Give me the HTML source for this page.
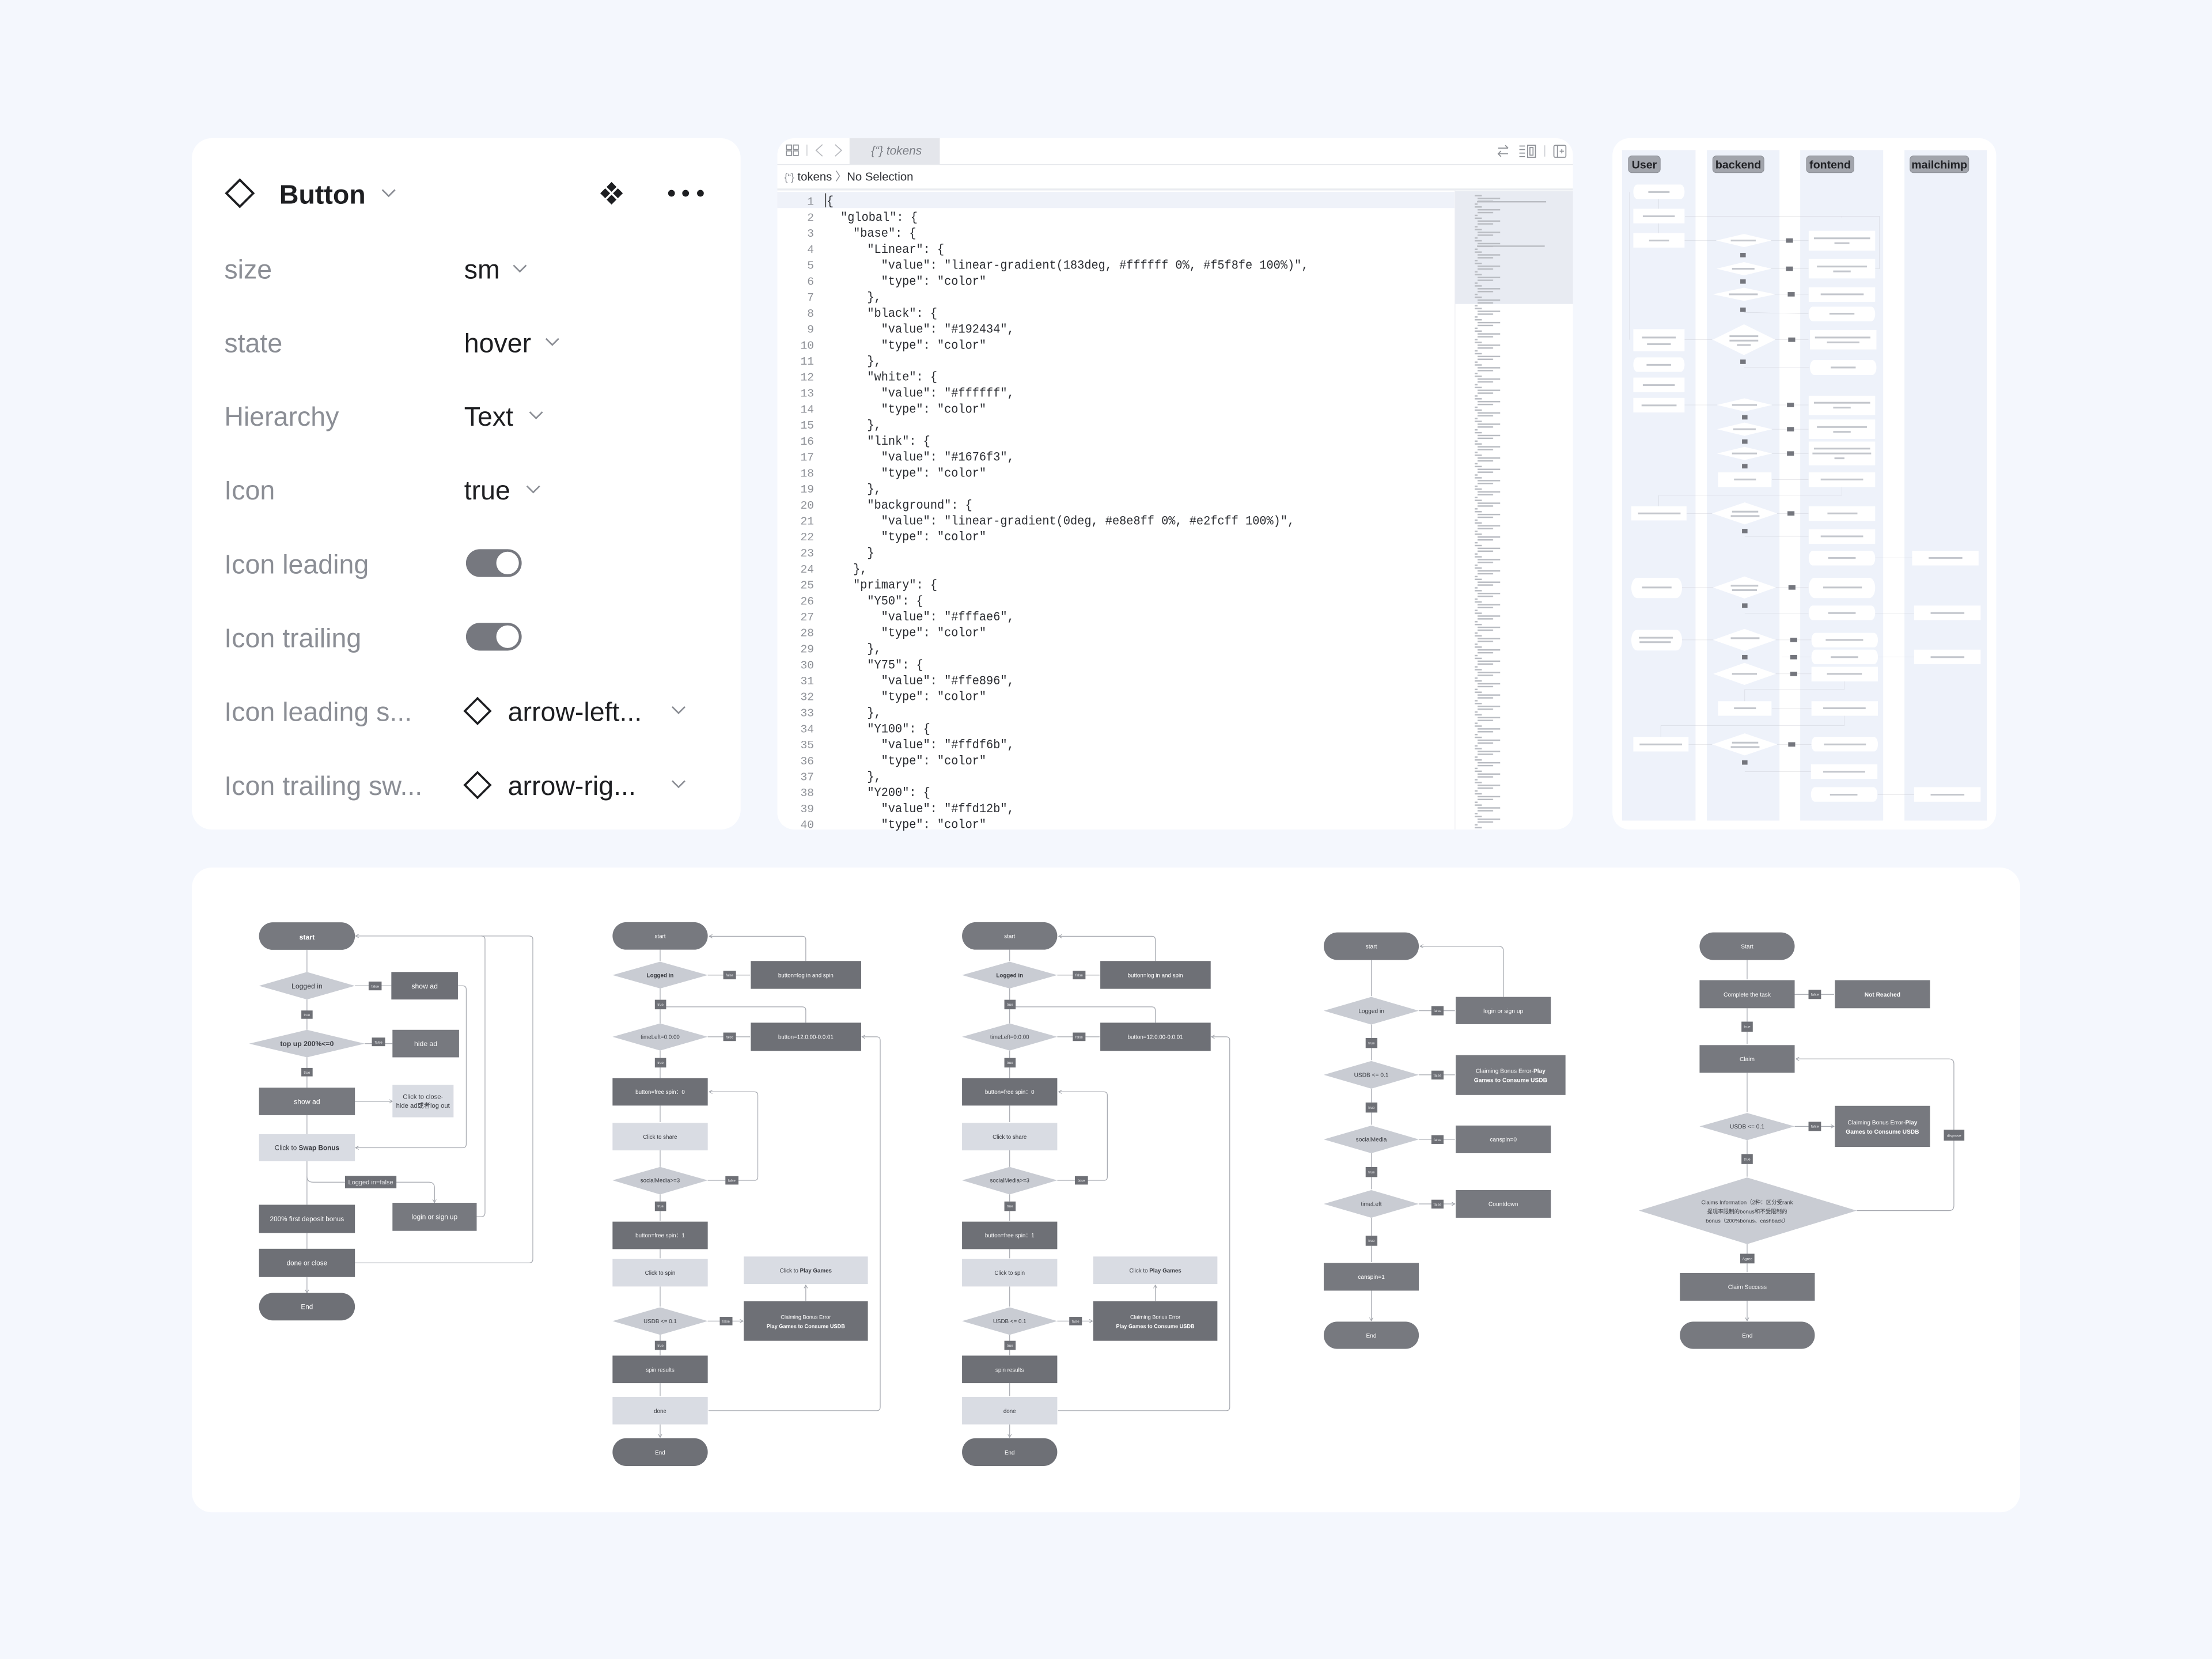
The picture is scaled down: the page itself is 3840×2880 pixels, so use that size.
<!DOCTYPE html>
<html><head><meta charset="utf-8"><style>
html,body{margin:0;padding:0;background:#f4f7fd;}
svg{display:block;}
text{font-family:"Liberation Sans","Noto Sans CJK SC",sans-serif;}
.mono{font-family:"Liberation Mono",monospace;font-size:9.2px;fill:#2a2c31;}
.ln{font-family:"Liberation Mono",monospace;font-size:8px;fill:#8f9298;text-anchor:end;}
.lbl{font-size:19px;fill:#8b8e95;}
.val{font-size:19px;fill:#1d1e21;}
.chev{fill:none;stroke:#8b8e95;stroke-width:1.1;}
.ln2{fill:none;stroke:#a5a8af;}
.dk{fill:#77797f;}
.dk2{fill:#6e7076;}
.lt{fill:#d9dce3;}
.dm{fill:#c9ccd3;}
.tw{fill:#fff;text-anchor:middle;}
.td{fill:#3a3c42;text-anchor:middle;}
.tag{fill:#6e7076;}
.tagt{fill:#e8e9ec;text-anchor:middle;}
</style></head><body>
<svg width="3840" height="2880" viewBox="0 0 1568 1176" xmlns="http://www.w3.org/2000/svg">
<defs>
<marker id="ar" markerWidth="6" markerHeight="6" refX="5" refY="3" orient="auto" markerUnits="strokeWidth"><path d="M0.5,0.5 L5,3 L0.5,5.5" fill="none" stroke="#9a9da4" stroke-width="0.8"/></marker>
<clipPath id="cp"><rect x="551" y="98" width="564" height="490" rx="12"/></clipPath>
<pattern id="mm" x="1031.4" y="138" width="84" height="8" patternUnits="userSpaceOnUse">
<rect x="14" y="0.2" width="5" height="1" fill="#b9bcc2"/>
<rect x="16" y="2.2" width="16" height="1" fill="#b9bcc2"/>
<rect x="16" y="4.2" width="11" height="1" fill="#b9bcc2"/>
<rect x="14" y="6.2" width="2" height="1" fill="#b9bcc2"/>
</pattern>
</defs>
<rect width="1568" height="1176" fill="#f4f7fd"/>

<!-- LEFT PANEL -->
<rect x="136" y="98" width="389" height="490" rx="14" fill="#fff"/>
<polygon points="160.5,137 170,127.5 179.5,137 170,146.5" fill="none" stroke="#1d1e21" stroke-width="1.6"/>
<text x="198" y="144.3" style="font-size:19px;font-weight:bold;fill:#1d1e21">Button</text>
<polyline class="chev" points="271,134.5 275.5,139 280,134.5"/>
<g fill="#1d1e21">
<polygon points="433.5,129 437,132.5 433.5,136 430,132.5"/>
<polygon points="433.5,138 437,141.5 433.5,145 430,141.5"/>
<polygon points="429,133.5 432.5,137 429,140.5 425.5,137"/>
<polygon points="438,133.5 441.5,137 438,140.5 434.5,137"/>
<circle cx="476" cy="137" r="2.4"/><circle cx="486" cy="137" r="2.4"/><circle cx="496.5" cy="137" r="2.4"/>
</g>
<text class="lbl" x="159" y="197.4">size</text>
<text class="lbl" x="159" y="249.6">state</text>
<text class="lbl" x="159" y="301.8">Hierarchy</text>
<text class="lbl" x="159" y="354">Icon</text>
<text class="lbl" x="159" y="406.5">Icon leading</text>
<text class="lbl" x="159" y="458.8">Icon trailing</text>
<text class="lbl" x="159" y="511">Icon leading s...</text>
<text class="lbl" x="159" y="563.5">Icon trailing sw...</text>
<text class="val" x="329" y="197.4">sm</text>
<polyline class="chev" points="364,188 368.5,192.5 373,188"/>
<text class="val" x="329" y="249.6">hover</text>
<polyline class="chev" points="387,240 391.5,244.5 396,240"/>
<text class="val" x="329" y="301.8">Text</text>
<polyline class="chev" points="375.5,292 380,296.5 384.5,292"/>
<text class="val" x="329" y="354">true</text>
<polyline class="chev" points="373.5,344.5 378,349 382.5,344.5"/>
<rect x="330.3" y="389.3" width="39.5" height="19.7" rx="9.85" fill="#76787f"/>
<circle cx="359.8" cy="399.1" r="8" fill="#fff"/>
<rect x="330.3" y="441.5" width="39.5" height="19.7" rx="9.85" fill="#76787f"/>
<circle cx="359.8" cy="451.3" r="8" fill="#fff"/>
<polygon points="329.5,504 338.5,495 347.5,504 338.5,513" fill="none" stroke="#1d1e21" stroke-width="1.5"/>
<text class="val" x="360" y="511">arrow-left...</text>
<polyline class="chev" points="476.5,501 481,505.5 485.5,501"/>
<polygon points="329.5,556.5 338.5,547.5 347.5,556.5 338.5,565.5" fill="none" stroke="#1d1e21" stroke-width="1.5"/>
<text class="val" x="360" y="563.5">arrow-rig...</text>
<polyline class="chev" points="476.5,553.5 481,558 485.5,553.5"/>

<!-- CODE PANEL -->
<g clip-path="url(#cp)">
<rect x="551" y="98" width="564" height="490" fill="#fff"/>
<rect x="602.2" y="98" width="64" height="18.4" fill="#e4e6eb"/>
<line x1="551" y1="116.6" x2="1115" y2="116.6" stroke="#e6e8ec" stroke-width="0.6"/>
<rect x="551" y="133.6" width="564" height="1.4" fill="#eaecf0"/>
<rect x="551" y="136" width="480" height="11.5" fill="#eff2f9"/>
<rect x="1031.4" y="135.5" width="84" height="80" fill="#e8ebf2"/>
<rect x="1031.4" y="138" width="84" height="450" fill="url(#mm)"/>
<rect x="1047" y="142.5" width="49" height="1" fill="#b9bcc2"/>
<rect x="1047" y="174" width="48" height="1" fill="#b9bcc2"/>
<line x1="1031.4" y1="135" x2="1031.4" y2="588" stroke="#eceef2" stroke-width="0.5"/>
</g>
<!-- toolbar icons -->
<g fill="none" stroke="#8d9096" stroke-width="0.7">
<rect x="557.5" y="102.8" width="3.6" height="3.2"/><rect x="562.3" y="102.8" width="3.6" height="3.2"/>
<rect x="557.5" y="107" width="3.6" height="3.2"/><rect x="562.3" y="107" width="3.6" height="3.2"/>
<line x1="572" y1="102.5" x2="572" y2="110.5" stroke="#d0d2d6"/>
<polyline points="583,102.5 578.5,106.6 583,110.7" stroke="#b7b9be"/>
<polyline points="592,102.5 596.5,106.6 592,110.7" stroke="#b7b9be"/>
<path d="M1062,105 H1069 M1067,103 L1069,105 M1069,109 H1062 M1064,107 L1062,109 L1064,111"/>
<path d="M1077,103.5 H1081 M1077,106 H1081 M1077,108.5 H1081 M1077,111 H1081"/>
<rect x="1082.8" y="103" width="5.6" height="8.5"/><rect x="1084.5" y="104.5" width="2.2" height="5.5"/>
<line x1="1095" y1="103" x2="1095" y2="111" stroke="#d0d2d6"/>
<rect x="1101.5" y="103" width="8.5" height="8.5" rx="1"/><line x1="1104" y1="103" x2="1104" y2="111.5"/>
<path d="M1105.6,107.2 H1108.6 M1107.1,105.7 V108.7"/>
</g>
<text x="617.5" y="109.6" style="font-size:8.5px;font-style:italic;fill:#7b7e85">{“} tokens</text>
<text x="556" y="128" style="font-size:8.3px;fill:#2a2c31"><tspan fill="#8b8e95" font-size="7">{“}</tspan> tokens <tspan fill="#8b8e95">〉</tspan>No Selection</text>
<line x1="585.3" y1="137" x2="585.3" y2="147" stroke="#222" stroke-width="0.6"/>

<g>
<text class="ln" x="577" y="145.2">1</text>
<text class="ln" x="577" y="156.5">2</text>
<text class="ln" x="577" y="167.9">3</text>
<text class="ln" x="577" y="179.2">4</text>
<text class="ln" x="577" y="190.5">5</text>
<text class="ln" x="577" y="201.9">6</text>
<text class="ln" x="577" y="213.2">7</text>
<text class="ln" x="577" y="224.5">8</text>
<text class="ln" x="577" y="235.8">9</text>
<text class="ln" x="577" y="247.2">10</text>
<text class="ln" x="577" y="258.5">11</text>
<text class="ln" x="577" y="269.8">12</text>
<text class="ln" x="577" y="281.2">13</text>
<text class="ln" x="577" y="292.5">14</text>
<text class="ln" x="577" y="303.8">15</text>
<text class="ln" x="577" y="315.2">16</text>
<text class="ln" x="577" y="326.5">17</text>
<text class="ln" x="577" y="337.8">18</text>
<text class="ln" x="577" y="349.1">19</text>
<text class="ln" x="577" y="360.5">20</text>
<text class="ln" x="577" y="371.8">21</text>
<text class="ln" x="577" y="383.1">22</text>
<text class="ln" x="577" y="394.5">23</text>
<text class="ln" x="577" y="405.8">24</text>
<text class="ln" x="577" y="417.1">25</text>
<text class="ln" x="577" y="428.5">26</text>
<text class="ln" x="577" y="439.8">27</text>
<text class="ln" x="577" y="451.1">28</text>
<text class="ln" x="577" y="462.4">29</text>
<text class="ln" x="577" y="473.8">30</text>
<text class="ln" x="577" y="485.1">31</text>
<text class="ln" x="577" y="496.4">32</text>
<text class="ln" x="577" y="507.8">33</text>
<text class="ln" x="577" y="519.1">34</text>
<text class="ln" x="577" y="530.4">35</text>
<text class="ln" x="577" y="541.8">36</text>
<text class="ln" x="577" y="553.1">37</text>
<text class="ln" x="577" y="564.4">38</text>
<text class="ln" x="577" y="575.7">39</text>
<text class="ln" x="577" y="587">40</text>
</g>
<g transform="matrix(0.9,0,0,1,58.5,0)">
<text class="mono" x="586" y="145.2">{</text>
<text class="mono" x="597" y="156.5">"global": {</text>
<text class="mono" x="607" y="167.9">"base": {</text>
<text class="mono" x="618" y="179.2">"Linear": {</text>
<text class="mono" x="629" y="190.5">"value": "linear-gradient(183deg, #ffffff 0%, #f5f8fe 100%)",</text>
<text class="mono" x="629" y="201.9">"type": "color"</text>
<text class="mono" x="618" y="213.2">},</text>
<text class="mono" x="618" y="224.5">"black": {</text>
<text class="mono" x="629" y="235.8">"value": "#192434",</text>
<text class="mono" x="629" y="247.2">"type": "color"</text>
<text class="mono" x="618" y="258.5">},</text>
<text class="mono" x="618" y="269.8">"white": {</text>
<text class="mono" x="629" y="281.2">"value": "#ffffff",</text>
<text class="mono" x="629" y="292.5">"type": "color"</text>
<text class="mono" x="618" y="303.8">},</text>
<text class="mono" x="618" y="315.2">"link": {</text>
<text class="mono" x="629" y="326.5">"value": "#1676f3",</text>
<text class="mono" x="629" y="337.8">"type": "color"</text>
<text class="mono" x="618" y="349.1">},</text>
<text class="mono" x="618" y="360.5">"background": {</text>
<text class="mono" x="629" y="371.8">"value": "linear-gradient(0deg, #e8e8ff 0%, #e2fcff 100%)",</text>
<text class="mono" x="629" y="383.1">"type": "color"</text>
<text class="mono" x="618" y="394.5">}</text>
<text class="mono" x="607" y="405.8">},</text>
<text class="mono" x="607" y="417.1">"primary": {</text>
<text class="mono" x="618" y="428.5">"Y50": {</text>
<text class="mono" x="629" y="439.8">"value": "#fffae6",</text>
<text class="mono" x="629" y="451.1">"type": "color"</text>
<text class="mono" x="618" y="462.4">},</text>
<text class="mono" x="618" y="473.8">"Y75": {</text>
<text class="mono" x="629" y="485.1">"value": "#ffe896",</text>
<text class="mono" x="629" y="496.4">"type": "color"</text>
<text class="mono" x="618" y="507.8">},</text>
<text class="mono" x="618" y="519.1">"Y100": {</text>
<text class="mono" x="629" y="530.4">"value": "#ffdf6b",</text>
<text class="mono" x="629" y="541.8">"type": "color"</text>
<text class="mono" x="618" y="553.1">},</text>
<text class="mono" x="618" y="564.4">"Y200": {</text>
<text class="mono" x="629" y="575.7">"value": "#ffd12b",</text>
<text class="mono" x="629" y="587">"type": "color"</text>
</g>

<!-- SWIMLANE PANEL -->
<rect x="1143" y="98" width="272" height="490" rx="12" fill="#fff"/>
<g fill="#eef2fa">
<rect x="1149.8" y="106.4" width="52.1" height="475.3"/>
<rect x="1209.9" y="106.4" width="51.5" height="475.3"/>
<rect x="1276.1" y="106.4" width="58.8" height="475.3"/>
<rect x="1350" y="106.4" width="58.4" height="475.3"/>
</g>
<g transform="translate(1139.2,98) scale(0.1771,0.3125)">
<g fill="none" stroke="#b8bbc2" stroke-width="0.5" vector-effect="non-scaling-stroke">
<path d="M310,232 H436 M655,232 H806 M655,296 H806 M670,354 H806 M548,395 L806,398 M310,457 H420 M670,457 H806 M548,520 H810 M310,605 H440 M660,605 H806 M660,660 H806 M660,715 H806 M660,774 H806 M940,791 V810 H207 V835 M318,851 H420 M680,851 H806 M551,903 H806 M300,1019 H425 M675,1019 H806 M551,1077 H806 M1073,952 H1221 M1073,1077 H1229 M300,1138 H425 M675,1138 H818 M675,1215 H818 M700,1177 H818 M1083,1177 H1229 M950,1232 V1250 H551 V1277 M660,1293 H818 M950,1310 V1332 H215 V1358 M326,1375 H420 M680,1375 H818 M551,1437 H818 M1083,1489 H1229 M207,138 V160 M207,193 V215 M90,122 V457 M940,180 V177 H312 M1073,296 H1090 V177 H940"/>
</g>
<g fill="#fff">
<rect x="105" y="105" width="205" height="33" rx="16"/>
<rect x="105" y="160" width="205" height="33"/>
<rect x="105" y="215" width="205" height="33"/>
<rect x="105" y="433" width="205" height="50"/>
<rect x="105" y="497" width="205" height="33" rx="16"/>
<rect x="105" y="543" width="205" height="33"/>
<rect x="105" y="589" width="205" height="33"/>
<rect x="97" y="835" width="221" height="32"/>
<rect x="97" y="997" width="203" height="46" rx="23"/>
<rect x="97" y="1115" width="203" height="47" rx="23"/>
<rect x="105" y="1358" width="221" height="33"/>
<polygon points="438,232 548,217 658,232 548,247"/>
<polygon points="438,296 548,281 658,296 548,311"/>
<polygon points="423,354 548,339 673,354 548,369"/>
<polygon points="423,457 548,422 673,457 548,492"/>
<polygon points="440,605 550,590 660,605 550,620"/>
<polygon points="440,660 550,645 660,660 550,675"/>
<polygon points="440,715 550,700 660,715 550,730"/>
<rect x="444" y="758" width="214" height="33"/>
<polygon points="421,851 551,826 681,851 551,876"/>
<polygon points="425,1019 550,994 675,1019 550,1044"/>
<polygon points="425,1138 550,1113 675,1138 550,1163"/>
<polygon points="425,1215 550,1190 675,1215 550,1240"/>
<rect x="444" y="1277" width="214" height="33"/>
<polygon points="421,1375 551,1350 681,1375 551,1400"/>
<rect x="807" y="210" width="266" height="45"/>
<rect x="807" y="274" width="266" height="44"/>
<rect x="807" y="338" width="266" height="33"/>
<rect x="807" y="382" width="266" height="33" rx="16"/>
<rect x="812" y="435" width="266" height="44"/>
<rect x="812" y="503" width="266" height="34" rx="17"/>
<rect x="807" y="584" width="266" height="44"/>
<rect x="807" y="638" width="266" height="44"/>
<rect x="807" y="688" width="266" height="54"/>
<rect x="807" y="758" width="266" height="33"/>
<rect x="807" y="835" width="266" height="33"/>
<rect x="807" y="887" width="266" height="33"/>
<rect x="807" y="936" width="266" height="33" rx="16"/>
<rect x="807" y="997" width="266" height="46" rx="23"/>
<rect x="807" y="1060" width="266" height="33" rx="16"/>
<rect x="818" y="1122" width="266" height="33" rx="16"/>
<rect x="818" y="1160" width="266" height="33" rx="16"/>
<rect x="818" y="1199" width="266" height="33"/>
<rect x="818" y="1277" width="266" height="33"/>
<rect x="818" y="1358" width="266" height="33" rx="16"/>
<rect x="816" y="1420" width="266" height="33"/>
<rect x="816" y="1472" width="266" height="33" rx="16"/>
<rect x="1221" y="936" width="266" height="33"/>
<rect x="1229" y="1060" width="266" height="33"/>
<rect x="1229" y="1160" width="266" height="33"/>
<rect x="1229" y="1472" width="266" height="33"/>
</g>
<g fill="#c3c6cc">
<rect x="165" y="120" width="85" height="4"/><rect x="143" y="175" width="128" height="4"/><rect x="168" y="230" width="80" height="4"/>
<rect x="140" y="450" width="135" height="4"/><rect x="160" y="465" width="95" height="4"/><rect x="158" y="512" width="98" height="4"/><rect x="143" y="558" width="128" height="4"/><rect x="138" y="604" width="140" height="4"/>
<rect x="124" y="849" width="170" height="4"/><rect x="140" y="1017" width="118" height="4"/><rect x="127" y="1131" width="136" height="4"/><rect x="130" y="1141" width="125" height="4"/><rect x="130" y="1373" width="170" height="4"/>
<rect x="495" y="230" width="100" height="4"/><rect x="500" y="294" width="90" height="4"/><rect x="488" y="352" width="115" height="4"/><rect x="490" y="447" width="115" height="4"/><rect x="490" y="457" width="115" height="4"/><rect x="520" y="467" width="55" height="4"/>
<rect x="500" y="603" width="100" height="4"/><rect x="505" y="658" width="90" height="4"/><rect x="500" y="713" width="100" height="4"/><rect x="508" y="772" width="88" height="4"/><rect x="500" y="845" width="105" height="4"/><rect x="495" y="855" width="115" height="4"/>
<rect x="495" y="1013" width="110" height="4"/><rect x="500" y="1023" width="100" height="4"/><rect x="495" y="1132" width="115" height="4"/><rect x="500" y="1213" width="100" height="4"/><rect x="508" y="1291" width="88" height="4"/><rect x="500" y="1369" width="105" height="4"/><rect x="495" y="1379" width="115" height="4"/>
<rect x="828" y="225" width="225" height="4"/><rect x="910" y="236" width="60" height="4"/><rect x="840" y="289" width="200" height="4"/><rect x="905" y="300" width="70" height="4"/><rect x="855" y="352" width="172" height="4"/><rect x="890" y="396" width="100" height="4"/>
<rect x="832" y="450" width="222" height="4"/><rect x="880" y="461" width="130" height="4"/><rect x="895" y="518" width="100" height="4"/><rect x="828" y="598" width="225" height="4"/><rect x="905" y="609" width="70" height="4"/><rect x="840" y="653" width="200" height="4"/><rect x="905" y="664" width="70" height="4"/>
<rect x="828" y="702" width="225" height="4"/><rect x="822" y="713" width="235" height="4"/><rect x="910" y="724" width="40" height="4"/><rect x="855" y="772" width="170" height="4"/><rect x="882" y="849" width="120" height="4"/><rect x="855" y="901" width="170" height="4"/><rect x="885" y="950" width="110" height="4"/>
<rect x="865" y="1017" width="155" height="4"/><rect x="885" y="1075" width="110" height="4"/><rect x="875" y="1136" width="150" height="4"/><rect x="895" y="1175" width="110" height="4"/><rect x="880" y="1213" width="140" height="4"/><rect x="865" y="1291" width="170" height="4"/><rect x="868" y="1373" width="168" height="4"/><rect x="865" y="1435" width="168" height="4"/><rect x="892" y="1487" width="110" height="4"/>
<rect x="1287" y="950" width="135" height="4"/><rect x="1295" y="1075" width="135" height="4"/><rect x="1295" y="1175" width="135" height="4"/><rect x="1295" y="1487" width="135" height="4"/>
</g>
<g fill="#74767d">
<rect x="716" y="227" width="28" height="10"/><rect x="716" y="291" width="28" height="10"/><rect x="723" y="349" width="28" height="10"/><rect x="725" y="452" width="28" height="10"/>
<rect x="720" y="600" width="28" height="10"/><rect x="720" y="655" width="28" height="10"/><rect x="720" y="710" width="28" height="10"/><rect x="722" y="846" width="28" height="10"/>
<rect x="726" y="1014" width="28" height="10"/><rect x="733" y="1133" width="28" height="10"/><rect x="733" y="1172" width="28" height="10"/><rect x="733" y="1210" width="28" height="10"/><rect x="725" y="1370" width="28" height="10"/>
<rect x="533" y="260" width="22" height="10"/><rect x="533" y="320" width="22" height="10"/><rect x="533" y="384" width="22" height="10"/><rect x="533" y="502" width="22" height="10"/>
<rect x="540" y="628" width="22" height="10"/><rect x="540" y="683" width="22" height="10"/><rect x="540" y="739" width="22" height="10"/><rect x="540" y="886" width="22" height="10"/><rect x="540" y="1055" width="22" height="10"/><rect x="540" y="1172" width="22" height="10"/><rect x="540" y="1411" width="22" height="10"/>
</g>
</g>
<g fill="#a2a5ac" stroke="#8b8e95" stroke-width="0.4">
<rect x="1154.3" y="110.5" width="22.6" height="11.9" rx="2.5"/>
<rect x="1214.1" y="110.5" width="36.3" height="11.9" rx="2.5"/>
<rect x="1280.5" y="110.5" width="33.7" height="11.9" rx="2.5"/>
<rect x="1353.9" y="110.5" width="41.7" height="11.9" rx="2.5"/>
</g>
<g style="font-size:8px;font-weight:bold;fill:#1f2024" text-anchor="middle">
<text x="1165.6" y="119.4">User</text>
<text x="1232.2" y="119.4">backend</text>
<text x="1297.3" y="119.4">fontend</text>
<text x="1374.7" y="119.4">mailchimp</text>
</g>

<!-- BOTTOM PANEL -->
<rect x="136" y="615" width="1296" height="457" rx="14" fill="#fff"/>

<!-- FC1 display coords -->
<g>
<g class="ln2" stroke-width="0.5">
<path d="M217.6,673.3 V689 M217.6,708.5 V730 M217.6,749.5 V771 M217.6,790.5 V804 M217.6,823 V854 M217.6,874 V885.2 M217.6,905.2 V916.5" marker-end="url(#ar)"/>
<path d="M251.6,698.8 H277.4 M258.6,739.8 H278.2 M251.6,780.7 H278.2" marker-end="url(#ar)"/>
<path d="M324.6,698.8 H328 Q330.5,698.8 330.5,701.5 V811 Q330.5,813.6 328,813.6 H252" marker-end="url(#ar)"/>
<path d="M217.6,834 Q217.6,838 222,838 H304 Q308,838 308,842 V852.5" marker-end="url(#ar)"/>
<path d="M337.9,862.5 H341 Q343.8,862.5 343.8,859.5 V666 Q343.8,663.5 341,663.5" />
<path d="M251.6,895.2 H375 Q377.7,895.2 377.7,892.5 V666 Q377.7,663.5 375,663.5 H252" marker-end="url(#ar)"/>
</g>
<rect x="183.6" y="653.8" width="68" height="19.5" rx="9.7" class="dk"/>
<text x="217.6" y="666" class="tw" style="font-size:5px;font-weight:bold">start</text>
<polygon points="183.6,698.8 217.6,689 251.6,698.8 217.6,708.5" class="dm"/>
<text x="217.6" y="700.6" class="td" style="font-size:5px">Logged in</text>
<rect x="261.3" y="695.8" width="9.2" height="6.2" class="tag"/><text x="265.9" y="700" class="tagt" style="font-size:2.6px">false</text>
<rect x="277.4" y="689" width="47.2" height="19.5" class="dk2"/>
<text x="301" y="700.6" class="tw" style="font-size:5px">show ad</text>
<rect x="213.6" y="716.3" width="8" height="5.9" class="tag"/><text x="217.6" y="720.3" class="tagt" style="font-size:2.6px">true</text>
<polygon points="176.6,739.8 217.6,730 258.6,739.8 217.6,749.5" class="dm"/>
<text x="217.6" y="741.6" class="td" style="font-size:5px;font-weight:bold">top up 200%&lt;=0</text>
<rect x="263.6" y="735.5" width="9.4" height="6.1" class="tag"/><text x="268.3" y="739.7" class="tagt" style="font-size:2.6px">false</text>
<rect x="278.2" y="730" width="47.2" height="19.5" class="dk"/>
<text x="301.8" y="741.6" class="tw" style="font-size:5px">hide ad</text>
<rect x="213.6" y="757" width="8" height="6" class="tag"/><text x="217.6" y="761.1" class="tagt" style="font-size:2.6px">true</text>
<rect x="183.6" y="771" width="68" height="19.5" class="dk"/>
<text x="217.6" y="782.5" class="tw" style="font-size:5px">show ad</text>
<rect x="278.2" y="769" width="43.3" height="23" class="lt"/>
<text x="299.8" y="778.8" class="td" style="font-size:4.6px">Click to close-</text>
<text x="299.8" y="785.2" class="td" style="font-size:4.6px">hide ad或者log out</text>
<rect x="183.6" y="804" width="68" height="19.1" class="lt"/>
<text x="217.6" y="815.3" class="td" style="font-size:4.8px">Click to <tspan font-weight="bold">Swap Bonus</tspan></text>
<rect x="244.6" y="833.5" width="36.4" height="8.8" class="tag"/><text x="262.8" y="839.6" class="tagt" style="font-size:4.5px">Logged in=false</text>
<rect x="183.6" y="854" width="68" height="20" class="dk2"/>
<text x="217.6" y="865.7" class="tw" style="font-size:4.8px">200% first deposit bonus</text>
<rect x="278.2" y="852.6" width="59.7" height="19.9" class="dk"/>
<text x="308" y="864.2" class="tw" style="font-size:4.8px">login or sign up</text>
<rect x="183.6" y="885.2" width="68" height="20" class="dk2"/>
<text x="217.6" y="897" class="tw" style="font-size:4.8px">done or close</text>
<rect x="183.6" y="916.5" width="68" height="19.5" rx="9.7" class="dk2"/>
<text x="217.6" y="928" class="tw" style="font-size:4.8px">End</text>
</g>

<!-- FC2 -->
<g transform="translate(424.7,649.2) scale(0.25)">
<g class="ln2" stroke-width="2">
<path d="M173,96 V128 M173,206 V238 M173,265 V305 M173,382 V403 M173,430 V460 M173,538 V585 M173,665 V712 M173,790 V810 M173,837 V865 M173,945 V971 M173,1051 V1108 M173,1188 V1205 M173,1231 V1246 M173,1325 V1362 M173,1442 V1479" marker-end="url(#ar)"/>
<path d="M308,168 H352 M388,168 H428 M308,343 H352 M388,343 H428 M308,1149 H342 M378,1149 H408" marker-end="url(#ar)"/>
<path d="M586,128 V68 Q586,58 576,58 H312" marker-end="url(#ar)"/>
<path d="M190,258 H576 Q586,258 586,268 V303"/>
<path d="M395,750 H440 Q450,750 450,740 V509 Q450,499 440,499 H312" marker-end="url(#ar)"/>
<path d="M308,750 H358"/>
<path d="M586,1092 V1047" marker-end="url(#ar)"/>
<path d="M310,1403 H787 Q797,1403 797,1393 V353 Q797,343 787,343 H745" marker-end="url(#ar)"/>
</g>
<rect x="38" y="18" width="270" height="78" rx="39" class="dk"/><text x="173" y="63" class="tw" style="font-size:16px">start</text>
<polygon points="38,168 173,130 308,168 173,206" class="dm"/><text x="173" y="174" class="td" style="font-size:16px;font-weight:bold">Logged in</text>
<rect x="352" y="156" width="36" height="24" class="tag"/><text x="370" y="172" class="tagt" style="font-size:10px">false</text>
<rect x="430" y="128" width="313" height="79" class="dk2"/><text x="586" y="174" class="tw" style="font-size:16px">button=log in and spin</text>
<rect x="158" y="238" width="32" height="27" class="tag"/><text x="174" y="255" class="tagt" style="font-size:10px">true</text>
<polygon points="38,343 173,305 308,343 173,382" class="dm"/><text x="173" y="349" class="td" style="font-size:16px">timeLeft=0:0:00</text>
<rect x="352" y="331" width="36" height="24" class="tag"/><text x="370" y="347" class="tagt" style="font-size:10px">false</text>
<rect x="430" y="303" width="313" height="80" class="dk2"/><text x="586" y="349" class="tw" style="font-size:16px">button=12:0:00-0:0:01</text>
<rect x="158" y="403" width="32" height="27" class="tag"/><text x="174" y="420" class="tagt" style="font-size:10px">true</text>
<rect x="38" y="460" width="270" height="78" class="dk2"/><text x="173" y="505" class="tw" style="font-size:16px">button=free spin：0</text>
<rect x="38" y="587" width="270" height="78" class="lt"/><text x="173" y="632" class="td" style="font-size:16px">Click to share</text>
<polygon points="38,750 173,712 308,750 173,790" class="dm"/><text x="173" y="756" class="td" style="font-size:16px">socialMedia&gt;=3</text>
<rect x="358" y="738" width="37" height="24" class="tag"/><text x="376" y="754" class="tagt" style="font-size:10px">false</text>
<rect x="158" y="810" width="32" height="27" class="tag"/><text x="174" y="827" class="tagt" style="font-size:10px">true</text>
<rect x="38" y="867" width="270" height="78" class="dk2"/><text x="173" y="912" class="tw" style="font-size:16px">button=free spin：1</text>
<rect x="38" y="973" width="270" height="78" class="lt"/><text x="173" y="1018" class="td" style="font-size:16px">Click to spin</text>
<rect x="410" y="966" width="352" height="78" class="lt"/><text x="586" y="1011" class="td" style="font-size:16px">Click to <tspan font-weight="bold">Play Games</tspan></text>
<polygon points="38,1149 173,1110 308,1149 173,1188" class="dm"/><text x="173" y="1155" class="td" style="font-size:16px">USDB &lt;= 0.1</text>
<rect x="342" y="1137" width="36" height="24" class="tag"/><text x="360" y="1153" class="tagt" style="font-size:10px">false</text>
<rect x="410" y="1093" width="352" height="112" class="dk2"/>
<text x="586" y="1143" class="tw" style="font-size:15px">Claiming Bonus Error</text>
<text x="586" y="1169" class="tw" style="font-size:15px;font-weight:bold">Play Games to Consume USDB</text>
<rect x="158" y="1205" width="32" height="26" class="tag"/><text x="174" y="1222" class="tagt" style="font-size:10px">true</text>
<rect x="38" y="1247" width="270" height="78" class="dk2"/><text x="173" y="1293" class="tw" style="font-size:16px">spin results</text>
<rect x="38" y="1364" width="270" height="78" class="lt"/><text x="173" y="1410" class="td" style="font-size:16px">done</text>
<rect x="38" y="1481" width="270" height="79" rx="39" class="dk2"/><text x="173" y="1527" class="tw" style="font-size:16px">End</text>
</g>

<!-- FC3 -->
<g transform="translate(672.45,649.2) scale(0.25)">
<g class="ln2" stroke-width="2">
<path d="M173,96 V128 M173,206 V238 M173,265 V305 M173,382 V403 M173,430 V460 M173,538 V585 M173,665 V712 M173,790 V810 M173,837 V865 M173,945 V971 M173,1051 V1108 M173,1188 V1205 M173,1231 V1246 M173,1325 V1362 M173,1442 V1479" marker-end="url(#ar)"/>
<path d="M308,168 H352 M388,168 H428 M308,343 H352 M388,343 H428 M308,1149 H342 M378,1149 H408" marker-end="url(#ar)"/>
<path d="M586,128 V68 Q586,58 576,58 H312" marker-end="url(#ar)"/>
<path d="M190,258 H576 Q586,258 586,268 V303"/>
<path d="M395,750 H440 Q450,750 450,740 V509 Q450,499 440,499 H312" marker-end="url(#ar)"/>
<path d="M308,750 H358"/>
<path d="M586,1092 V1047" marker-end="url(#ar)"/>
<path d="M310,1403 H787 Q797,1403 797,1393 V353 Q797,343 787,343 H745" marker-end="url(#ar)"/>
</g>
<rect x="38" y="18" width="270" height="78" rx="39" class="dk"/><text x="173" y="63" class="tw" style="font-size:16px">start</text>
<polygon points="38,168 173,130 308,168 173,206" class="dm"/><text x="173" y="174" class="td" style="font-size:16px;font-weight:bold">Logged in</text>
<rect x="352" y="156" width="36" height="24" class="tag"/><text x="370" y="172" class="tagt" style="font-size:10px">false</text>
<rect x="430" y="128" width="313" height="79" class="dk2"/><text x="586" y="174" class="tw" style="font-size:16px">button=log in and spin</text>
<rect x="158" y="238" width="32" height="27" class="tag"/><text x="174" y="255" class="tagt" style="font-size:10px">true</text>
<polygon points="38,343 173,305 308,343 173,382" class="dm"/><text x="173" y="349" class="td" style="font-size:16px">timeLeft=0:0:00</text>
<rect x="352" y="331" width="36" height="24" class="tag"/><text x="370" y="347" class="tagt" style="font-size:10px">false</text>
<rect x="430" y="303" width="313" height="80" class="dk2"/><text x="586" y="349" class="tw" style="font-size:16px">button=12:0:00-0:0:01</text>
<rect x="158" y="403" width="32" height="27" class="tag"/><text x="174" y="420" class="tagt" style="font-size:10px">true</text>
<rect x="38" y="460" width="270" height="78" class="dk2"/><text x="173" y="505" class="tw" style="font-size:16px">button=free spin：0</text>
<rect x="38" y="587" width="270" height="78" class="lt"/><text x="173" y="632" class="td" style="font-size:16px">Click to share</text>
<polygon points="38,750 173,712 308,750 173,790" class="dm"/><text x="173" y="756" class="td" style="font-size:16px">socialMedia&gt;=3</text>
<rect x="358" y="738" width="37" height="24" class="tag"/><text x="376" y="754" class="tagt" style="font-size:10px">false</text>
<rect x="158" y="810" width="32" height="27" class="tag"/><text x="174" y="827" class="tagt" style="font-size:10px">true</text>
<rect x="38" y="867" width="270" height="78" class="dk2"/><text x="173" y="912" class="tw" style="font-size:16px">button=free spin：1</text>
<rect x="38" y="973" width="270" height="78" class="lt"/><text x="173" y="1018" class="td" style="font-size:16px">Click to spin</text>
<rect x="410" y="966" width="352" height="78" class="lt"/><text x="586" y="1011" class="td" style="font-size:16px">Click to <tspan font-weight="bold">Play Games</tspan></text>
<polygon points="38,1149 173,1110 308,1149 173,1188" class="dm"/><text x="173" y="1155" class="td" style="font-size:16px">USDB &lt;= 0.1</text>
<rect x="342" y="1137" width="36" height="24" class="tag"/><text x="360" y="1153" class="tagt" style="font-size:10px">false</text>
<rect x="410" y="1093" width="352" height="112" class="dk2"/>
<text x="586" y="1143" class="tw" style="font-size:15px">Claiming Bonus Error</text>
<text x="586" y="1169" class="tw" style="font-size:15px;font-weight:bold">Play Games to Consume USDB</text>
<rect x="158" y="1205" width="32" height="26" class="tag"/><text x="174" y="1222" class="tagt" style="font-size:10px">true</text>
<rect x="38" y="1247" width="270" height="78" class="dk2"/><text x="173" y="1293" class="tw" style="font-size:16px">spin results</text>
<rect x="38" y="1364" width="270" height="78" class="lt"/><text x="173" y="1410" class="td" style="font-size:16px">done</text>
<rect x="38" y="1481" width="270" height="79" rx="39" class="dk2"/><text x="173" y="1527" class="tw" style="font-size:16px">End</text>
</g>

<!-- FC4 + FC5 -->
<g transform="translate(933,645.2) scale(0.297)">
<g class="ln2" stroke-width="1.7">
<path d="M131.5,119 V205 M131.5,273 V305 M131.5,329 V358 M131.5,426 V459 M131.5,483 V512 M131.5,580 V613 M131.5,637 V666 M131.5,734 V777 M131.5,801 V840 M131.5,908 V980" marker-end="url(#ar)"/>
<path d="M245,240 H275 M304,240 H331 M245,393 H275 M304,393 H331 M245,547 H275 M304,547 H331 M245,701 H275 M304,701 H331" marker-end="url(#ar)"/>
<path d="M447,207 V98 Q447,86 435,86 H248" marker-end="url(#ar)"/>
<path d="M1028.5,119 V165 M1028.5,234 V266 M1028.5,290 V320 M1028.5,388 V482 M1028.5,549 V582 M1028.5,606 V636 M1028.5,797 V820 M1028.5,843 V864 M1028.5,932 V980" marker-end="url(#ar)"/>
<path d="M1142,201 H1175 M1205,201 H1236 M1142,516 H1175 M1205,516 H1236" marker-end="url(#ar)"/>
<path d="M1290,717 H1510 Q1522,717 1522,705 V367 Q1522,355 1510,355 H1145" marker-end="url(#ar)"/>
</g>
<rect x="18" y="53" width="227" height="66" rx="33" class="dk"/><text x="131.5" y="91" class="tw" style="font-size:14px">start</text>
<polygon points="18,240 131.5,207 245,240 131.5,273" class="dm"/><text x="131.5" y="245" class="td" style="font-size:14px">Logged in</text>
<rect x="275" y="229" width="29" height="22" class="tag"/><text x="289.5" y="243" class="tagt" style="font-size:9px">false</text>
<rect x="333" y="207" width="227" height="65" class="dk"/><text x="446.5" y="245" class="tw" style="font-size:14px">login or sign up</text>
<rect x="118" y="305" width="28" height="24" class="tag"/><text x="132" y="320" class="tagt" style="font-size:9px">true</text>
<polygon points="18,393 131.5,360 245,393 131.5,426" class="dm"/><text x="131.5" y="398" class="td" style="font-size:14px">USDB &lt;= 0.1</text>
<rect x="275" y="383" width="29" height="21" class="tag"/><text x="289.5" y="397" class="tagt" style="font-size:9px">false</text>
<rect x="333" y="346" width="262" height="95" class="dk"/>
<text x="464" y="388" class="tw" style="font-size:14px">Claiming Bonus Error-<tspan font-weight="bold">Play</tspan></text>
<text x="464" y="410" class="tw" style="font-size:14px;font-weight:bold">Games to Consume USDB</text>
<rect x="118" y="459" width="28" height="24" class="tag"/><text x="132" y="474" class="tagt" style="font-size:9px">true</text>
<polygon points="18,547 131.5,514 245,547 131.5,580" class="dm"/><text x="131.5" y="552" class="td" style="font-size:14px">socialMedia</text>
<rect x="275" y="537" width="29" height="21" class="tag"/><text x="289.5" y="551" class="tagt" style="font-size:9px">false</text>
<rect x="333" y="514" width="227" height="66" class="dk"/><text x="446.5" y="552" class="tw" style="font-size:14px">canspin=0</text>
<rect x="118" y="613" width="28" height="24" class="tag"/><text x="132" y="628" class="tagt" style="font-size:9px">true</text>
<polygon points="18,701 131.5,668 245,701 131.5,734" class="dm"/><text x="131.5" y="706" class="td" style="font-size:14px">timeLeft</text>
<rect x="275" y="691" width="29" height="21" class="tag"/><text x="289.5" y="705" class="tagt" style="font-size:9px">false</text>
<rect x="333" y="668" width="227" height="66" class="dk"/><text x="446.5" y="706" class="tw" style="font-size:14px">Countdown</text>
<rect x="118" y="777" width="28" height="24" class="tag"/><text x="132" y="792" class="tagt" style="font-size:9px">true</text>
<rect x="18" y="842" width="227" height="66" class="dk"/><text x="131.5" y="880" class="tw" style="font-size:14px">canspin=1</text>
<rect x="18" y="982" width="227" height="65" rx="32" class="dk"/><text x="131.5" y="1020" class="tw" style="font-size:14px">End</text>

<rect x="915" y="53" width="227" height="66" rx="33" class="dk"/><text x="1028.5" y="91" class="tw" style="font-size:14px">Start</text>
<rect x="915" y="167" width="227" height="67" class="dk"/><text x="1028.5" y="206" class="tw" style="font-size:14px">Complete the task</text>
<rect x="1175" y="190" width="30" height="22" class="tag"/><text x="1190" y="204" class="tagt" style="font-size:9px">false</text>
<rect x="1238" y="167" width="227" height="67" class="dk"/><text x="1351.5" y="206" class="tw" style="font-size:14px;font-weight:bold">Not Reached</text>
<rect x="1015" y="266" width="27" height="24" class="tag"/><text x="1028.5" y="281" class="tagt" style="font-size:9px">true</text>
<rect x="915" y="322" width="227" height="66" class="dk"/><text x="1028.5" y="360" class="tw" style="font-size:14px">Claim</text>
<polygon points="915,516 1028.5,484 1142,516 1028.5,549" class="dm"/><text x="1028.5" y="521" class="td" style="font-size:14px">USDB &lt;= 0.1</text>
<rect x="1175" y="505" width="30" height="22" class="tag"/><text x="1190" y="519" class="tagt" style="font-size:9px">false</text>
<rect x="1238" y="467" width="227" height="98" class="dk"/>
<text x="1351.5" y="511" class="tw" style="font-size:14px">Claiming Bonus Error-<tspan font-weight="bold">Play</tspan></text>
<text x="1351.5" y="533" class="tw" style="font-size:14px;font-weight:bold">Games to Consume USDB</text>
<rect x="1498" y="524" width="49" height="26" class="tag"/><text x="1522.5" y="541" class="tagt" style="font-size:9px">disprove</text>
<rect x="1015" y="582" width="27" height="24" class="tag"/><text x="1028.5" y="597" class="tagt" style="font-size:9px">true</text>
<polygon points="770,717 1028.5,638 1290,717 1028.5,797" class="dm"/>
<text x="1028.5" y="702" class="td" style="font-size:13px">Claims Information（2种：区分受rank</text>
<text x="1028.5" y="724" class="td" style="font-size:13px">提现率限制的bonus和不受限制的</text>
<text x="1028.5" y="746" class="td" style="font-size:13px">bonus（200%bonus、cashback）</text>
<rect x="1012" y="820" width="34" height="23" class="tag"/><text x="1029" y="835" class="tagt" style="font-size:9px">Agree</text>
<rect x="868" y="866" width="322" height="66" class="dk"/><text x="1029" y="904" class="tw" style="font-size:14px">Claim Success</text>
<rect x="868" y="982" width="322" height="65" rx="32" class="dk"/><text x="1029" y="1020" class="tw" style="font-size:14px">End</text>
</g>
</svg>
</body></html>
